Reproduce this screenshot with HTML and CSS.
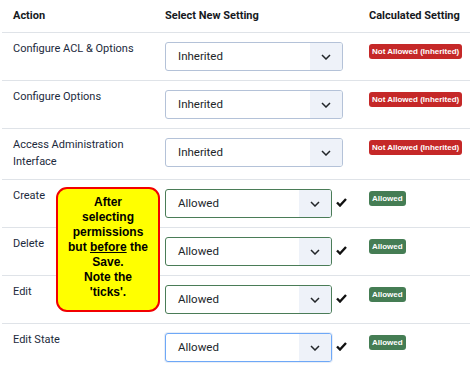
FILE: index.html
```html
<!DOCTYPE html>
<html lang="en">
<head>
  <meta charset="UTF-8"><title>Permissions</title>
  <link rel="stylesheet" href="styles.css">
</head>
<body>

  <div class="perm-table">
    <div class="row head">
      <div class="cell">Action</div>
      <div class="cell">Select New Setting</div>
      <div class="cell">Calculated Setting</div>
    </div>

    <div class="row">
      <div class="cell label">Configure ACL &amp; Options</div>
      <div class="cell"><div class="select wide"><span>Inherited</span><i class="arrow"><svg width="10" height="6" viewBox="0 0 10 6"><path d="M1 1l4 4 4-4" fill="none" stroke="#22262a" stroke-width="1.5"/></svg></i></div></div>
      <div class="cell"><span class="badge red">Not Allowed (Inherited)</span></div>
    </div>

    <div class="row">
      <div class="cell label">Configure Options</div>
      <div class="cell"><div class="select wide"><span>Inherited</span><i class="arrow"><svg width="10" height="6" viewBox="0 0 10 6"><path d="M1 1l4 4 4-4" fill="none" stroke="#22262a" stroke-width="1.5"/></svg></i></div></div>
      <div class="cell"><span class="badge red">Not Allowed (Inherited)</span></div>
    </div>

    <div class="row">
      <div class="cell label">Access Administration Interface</div>
      <div class="cell"><div class="select wide"><span>Inherited</span><i class="arrow"><svg width="10" height="6" viewBox="0 0 10 6"><path d="M1 1l4 4 4-4" fill="none" stroke="#22262a" stroke-width="1.5"/></svg></i></div></div>
      <div class="cell"><span class="badge red">Not Allowed (Inherited)</span></div>
    </div>

    <div class="row">
      <div class="cell label">Create</div>
      <div class="cell pick"><div class="select ok"><span>Allowed</span><i class="arrow"><svg width="10" height="6" viewBox="0 0 10 6"><path d="M1 1l4 4 4-4" fill="none" stroke="#22262a" stroke-width="1.5"/></svg></i></div><svg class="tick" width="11" height="9" viewBox="0 0 11 9"><path d="M1 4.5l3 3 6-6.5" fill="none" stroke="#111" stroke-width="2.4"/></svg></div>
      <div class="cell"><span class="badge green">Allowed</span></div>
    </div>

    <div class="row">
      <div class="cell label">Delete</div>
      <div class="cell pick"><div class="select ok"><span>Allowed</span><i class="arrow"><svg width="10" height="6" viewBox="0 0 10 6"><path d="M1 1l4 4 4-4" fill="none" stroke="#22262a" stroke-width="1.5"/></svg></i></div><svg class="tick" width="11" height="9" viewBox="0 0 11 9"><path d="M1 4.5l3 3 6-6.5" fill="none" stroke="#111" stroke-width="2.4"/></svg></div>
      <div class="cell"><span class="badge green">Allowed</span></div>
    </div>

    <div class="row">
      <div class="cell label">Edit</div>
      <div class="cell pick"><div class="select ok"><span>Allowed</span><i class="arrow"><svg width="10" height="6" viewBox="0 0 10 6"><path d="M1 1l4 4 4-4" fill="none" stroke="#22262a" stroke-width="1.5"/></svg></i></div><svg class="tick" width="11" height="9" viewBox="0 0 11 9"><path d="M1 4.5l3 3 6-6.5" fill="none" stroke="#111" stroke-width="2.4"/></svg></div>
      <div class="cell"><span class="badge green">Allowed</span></div>
    </div>

    <div class="row">
      <div class="cell label">Edit State</div>
      <div class="cell pick"><div class="select focus"><span>Allowed</span><i class="arrow"><svg width="10" height="6" viewBox="0 0 10 6"><path d="M1 1l4 4 4-4" fill="none" stroke="#22262a" stroke-width="1.5"/></svg></i></div><svg class="tick" width="11" height="9" viewBox="0 0 11 9"><path d="M1 4.5l3 3 6-6.5" fill="none" stroke="#111" stroke-width="2.4"/></svg></div>
      <div class="cell"><span class="badge green">Allowed</span></div>
    </div>

    <!-- callout note over the table -->
    <div class="note">After<br>selecting<br>permissions<br>but <u>before</u> the<br>Save.<br>Note the<br>'ticks'.</div>
  </div>

</body>
</html>
```

FILE: styles.css
```css
* { margin:0; padding:0; box-sizing:border-box }
body { font-family:Roboto, sans-serif; background:#fff; color:#1c2a3c; font-size:11px; overflow:hidden; }

.perm-table { position:relative; margin-left:2px; }
.row { display:grid; grid-template-columns:152px 204px 114px; border-bottom:1px solid #dfe3e8; }
.cell { padding:9px 11px; line-height:16.5px; white-space:nowrap; }
.head .cell { font-weight:bold; color:#16191d; padding:8px 11px; line-height:16px; }
.label { padding-top:8px; white-space:normal; }

.select { display:flex; height:29px; border:1px solid #b4c2d8; border-radius:3px; background:#fff; overflow:hidden; color:#22262a; }
.select span { flex:1; padding-left:12px; line-height:27px; font-size:11.5px; }
.select .arrow { width:32px; background:#eef2f9; display:flex; align-items:center; justify-content:center; }
.select.wide { width:178px; }
.select.ok { width:167px; border-color:#4a7c57; }
.select.focus { width:167px; border-color:#6ea8f7; box-shadow:0 0 0 1px #e8eef7; }

.pick { display:flex; align-items:center; gap:4px; }
.pick .tick { margin-top:-2px; }

.badge { display:inline-block; color:#fff; font-weight:bold; font-size:8px; line-height:15px; padding:0 3px; border-radius:3px; margin-top:2px; font-family:"Liberation Sans", sans-serif; }
.badge.red { background:#c52828; }
.badge.green { background:#457d54; }

.note { position:absolute; left:54px; top:187px; width:104px; height:125px; background:#ffff00; border:2px solid #f20000;
  border-radius:11px; font-family:"Liberation Sans", sans-serif; font-weight:bold; font-size:12px; line-height:15px;
  text-align:center; color:#000; padding-top:6px;
}
```
